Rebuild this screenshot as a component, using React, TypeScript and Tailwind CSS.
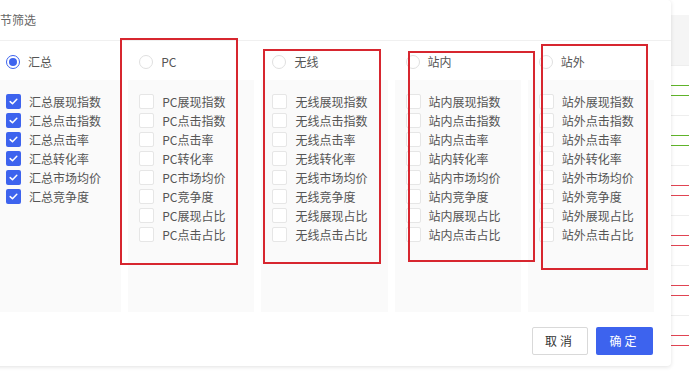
import React from "react";

const groups = [
  { key: "all", name: "汇总", active: true },
  { key: "pc", name: "PC", active: false },
  { key: "wx", name: "无线", active: false },
  { key: "zn", name: "站内", active: false },
  { key: "zw", name: "站外", active: false },
];

const metrics = ["展现指数", "点击指数", "点击率", "转化率", "市场均价", "竞争度", "展现占比", "点击占比"];

function Radio({ checked }: { checked: boolean }) {
  return (
    <span
      className={`flex h-[14px] w-[14px] shrink-0 items-center justify-center rounded-full border bg-white ${
        checked ? "border-[#3d63ee]" : "border-[#e0e0e0]"
      }`}
    >
      {checked && <span className="h-[8px] w-[8px] rounded-full bg-[#3d63ee]" />}
    </span>
  );
}

function Checkbox({ checked }: { checked: boolean }) {
  if (checked) {
    return (
      <span className="flex h-[15px] w-[15px] shrink-0 items-center justify-center rounded-[2px] bg-[#3d63ee]">
        <svg width="11" height="11" viewBox="0 0 11 11" fill="none">
          <path d="M2.2 5.6 L4.5 7.8 L8.8 3.2" stroke="white" strokeWidth="1.5" strokeLinecap="round" strokeLinejoin="round" />
        </svg>
      </span>
    );
  }
  return <span className="h-[15px] w-[15px] shrink-0 rounded-[2px] border border-[#e6e6e6] bg-white" />;
}

function Column({ group }: { group: (typeof groups)[number] }) {
  // 汇总 only lists six metrics; the channel groups add the two share metrics
  const items = group.key === "all" ? metrics.slice(0, 6) : metrics;
  return (
    <div className="flex flex-col">
      <div className="flex h-[28px] items-center gap-[8px] pl-[11px] text-[12px] text-[#555]">
        <Radio checked={group.active} />
        <span>{group.name}</span>
      </div>
      <div className="mt-[4px] h-[232px] bg-[#fafafa] pt-[12px]">
        {items.map((m) => (
          <label key={m} className="flex h-[19px] items-center gap-[8px] pl-[11px] text-[12px] text-[#555]">
            <Checkbox checked={group.active} />
            <span className="whitespace-nowrap">
              {group.name}
              {m}
            </span>
          </label>
        ))}
      </div>
    </div>
  );
}

function PageRow({ color }: { color: string }) {
  return (
    <div className="flex h-[50px] border-t border-[#eeeeee]">
      <div className="w-[15px]" />
      <div className="w-[153px] border-l border-[#eeeeee]" />
      <div className="w-[153px] border-l border-[#eeeeee]" />
      <div className="w-[153px] border-l border-[#eeeeee]" />
      <div className="flex flex-1 flex-col border-l border-[#eeeeee] pt-[19px]">
        <div className={`h-px ${color}`} />
        <div className={`mt-[9px] h-px ${color}`} />
      </div>
    </div>
  );
}

export default function App() {
  const rowColors = ["bg-[#5fb32a]", "bg-[#5fb32a]", "bg-[#e04452]", "bg-[#e04452]", "bg-[#e04452]", "bg-[#e04452]"];
  return (
    <div
      className="relative h-[373px] w-[689px] overflow-hidden bg-white"
      style={{ fontFamily: '"Noto Sans CJK SC", "Noto Sans", sans-serif' }}
    >
      {/* page behind the dialog */}
      <div className="flex flex-col pt-[15px]">
        <div className="h-[50px] bg-[#f5f5f5]" />
        {rowColors.map((c, i) => (
          <PageRow key={i} color={c} />
        ))}
      </div>

      {/* dialog */}
      <div className="absolute left-[-22px] top-0 flex h-[366px] w-[693px] flex-col rounded-[4px] bg-white shadow-[0_1px_4px_rgba(0,0,0,0.12)]">
        <div className="flex h-[41px] items-center border-b border-[#f0f0f0] pl-[22px] pb-[1px] text-[12px] text-[#666]">
          节筛选
        </div>
        <div className="grid w-[676px] grid-cols-5 gap-x-[7px] pl-[17px] pt-[7px]">
          {groups.map((g) => (
            <Column key={g.key} group={g} />
          ))}
        </div>
        <div className="flex justify-end gap-[8px] pr-[18px] pt-[15px]">
          <button className="h-[28px] w-[56px] rounded-[2px] border border-[#d9d9d9] bg-white text-[12px] tracking-[3px] text-[#333]">
            取消
          </button>
          <button className="h-[28px] w-[57px] rounded-[2px] bg-[#3d63ee] text-[12px] tracking-[3px] text-white">
            确定
          </button>
        </div>
      </div>

      {/* red annotation boxes drawn over the screenshot */}
      <div className="absolute left-[120px] top-[38px] h-[227px] w-[118px] border-2 border-[#d7262f]" />
      <div className="absolute left-[263px] top-[49px] h-[215px] w-[118px] border-2 border-[#d7262f]" />
      <div className="absolute left-[408px] top-[51px] h-[211px] w-[127px] border-2 border-[#d7262f]" />
      <div className="absolute left-[541px] top-[44px] h-[226px] w-[107px] border-2 border-[#d7262f]" />
    </div>
  );
}
